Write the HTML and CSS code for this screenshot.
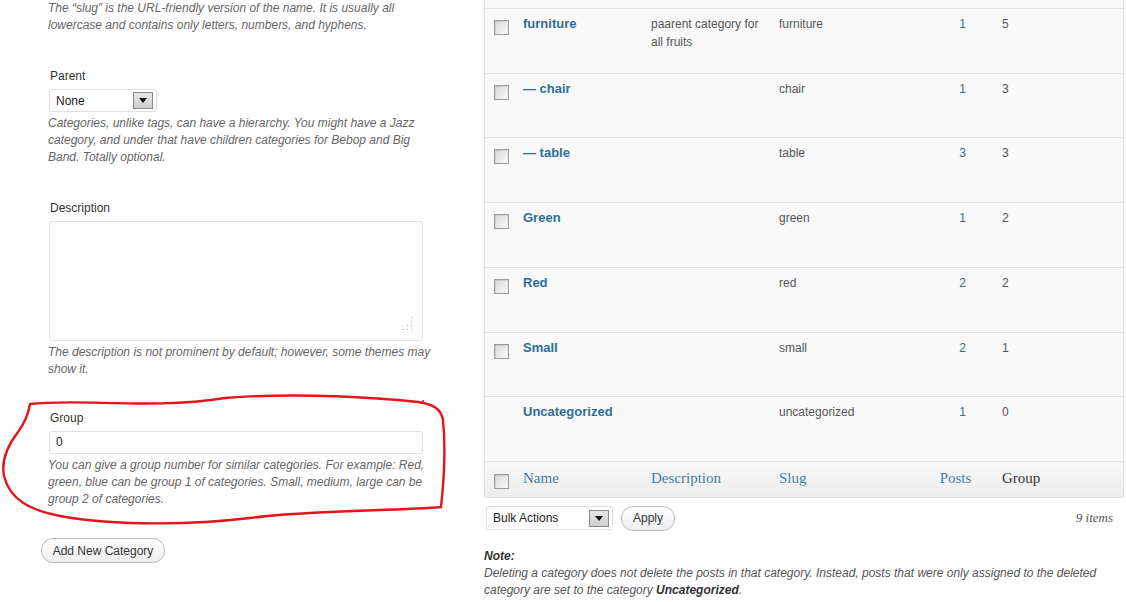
FILE: index.html
```html
<!DOCTYPE html>
<html lang="en">
<head>
<meta charset="utf-8">
<title>Categories</title>
<link rel="stylesheet" href="styles.css">
</head>
<body>
<div class="page">
  <div class="left">
    <p class="help">The “slug” is the URL-friendly version of the name. It is usually all lowercase and contains only letters, numbers, and hyphens.</p>

    <div class="field field-parent">
      <label class="label">Parent</label>
      <div class="select parent-select"><span class="select-text">None</span><span class="arrow"></span></div>
      <p class="help">Categories, unlike tags, can have a hierarchy. You might have a Jazz category, and under that have children categories for Bebop and Big Band. Totally optional.</p>
    </div>

    <div class="field field-desc">
      <label class="label">Description</label>
      <div class="textarea">
        <svg class="grip" width="12" height="14" viewBox="0 0 12 14">
          <rect x="9" y="0" width="1" height="1" fill="#aaa"/>
          <rect x="9" y="4" width="1" height="1" fill="#aaa"/>
          <rect x="5" y="8" width="1" height="1" fill="#aaa"/>
          <rect x="9" y="8" width="1" height="1" fill="#aaa"/>
          <rect x="1" y="12" width="1" height="1" fill="#aaa"/>
          <rect x="5" y="12" width="1" height="1" fill="#aaa"/>
          <rect x="9" y="12" width="1" height="1" fill="#aaa"/>
        </svg>
      </div>
      <p class="help">The description is not prominent by default; however, some themes may show it.</p>
    </div>

    <div class="field field-group">
      <label class="label">Group</label>
      <div class="input">0</div>
      <p class="help">You can give a group number for similar categories. For example: Red, green, blue can be group 1 of categories. Small, medium, large can be group 2 of categories.</p>
    </div>

    <button class="btn add-btn">Add New Category</button>
  </div>

  <div class="right">
    <div class="table">
      <div class="row-tail"></div>

      <div class="row">
        <div class="c-cb"><span class="cb"></span></div>
        <div class="c-name"><a class="name">furniture</a></div>
        <div class="c-desc">paarent category for all fruits</div>
        <div class="c-slug">furniture</div>
        <div class="c-posts"><a class="num">1</a></div>
        <div class="c-group">5</div>
      </div>
      <div class="row">
        <div class="c-cb"><span class="cb"></span></div>
        <div class="c-name"><a class="name">— chair</a></div>
        <div class="c-desc"></div>
        <div class="c-slug">chair</div>
        <div class="c-posts"><a class="num">1</a></div>
        <div class="c-group">3</div>
      </div>
      <div class="row">
        <div class="c-cb"><span class="cb"></span></div>
        <div class="c-name"><a class="name">— table</a></div>
        <div class="c-desc"></div>
        <div class="c-slug">table</div>
        <div class="c-posts"><a class="num">3</a></div>
        <div class="c-group">3</div>
      </div>
      <div class="row">
        <div class="c-cb"><span class="cb"></span></div>
        <div class="c-name"><a class="name">Green</a></div>
        <div class="c-desc"></div>
        <div class="c-slug">green</div>
        <div class="c-posts"><a class="num">1</a></div>
        <div class="c-group">2</div>
      </div>
      <div class="row">
        <div class="c-cb"><span class="cb"></span></div>
        <div class="c-name"><a class="name">Red</a></div>
        <div class="c-desc"></div>
        <div class="c-slug">red</div>
        <div class="c-posts"><a class="num">2</a></div>
        <div class="c-group">2</div>
      </div>
      <div class="row">
        <div class="c-cb"><span class="cb"></span></div>
        <div class="c-name"><a class="name">Small</a></div>
        <div class="c-desc"></div>
        <div class="c-slug">small</div>
        <div class="c-posts"><a class="num">2</a></div>
        <div class="c-group">1</div>
      </div>
      <div class="row">
        <div class="c-cb"></div>
        <div class="c-name"><a class="name">Uncategorized</a></div>
        <div class="c-desc"></div>
        <div class="c-slug">uncategorized</div>
        <div class="c-posts"><a class="num">1</a></div>
        <div class="c-group">0</div>
      </div>

      <div class="row foot">
        <div class="c-cb"><span class="cb"></span></div>
        <div class="c-name"><a class="head-link">Name</a></div>
        <div class="c-desc"><a class="head-link">Description</a></div>
        <div class="c-slug"><a class="head-link">Slug</a></div>
        <div class="c-posts"><a class="head-link posts-link">Posts</a></div>
        <div class="c-group"><span class="head-text">Group</span></div>
      </div>
    </div>

    <div class="tablenav">
      <div class="select bulk-select"><span class="select-text">Bulk Actions</span><span class="arrow"></span></div>
      <button class="btn apply-btn">Apply</button>
      <span class="count">9 items</span>
    </div>

    <div class="note">
      <p class="note-title">Note:</p>
      <p>Deleting a category does not delete the posts in that category. Instead, posts that were only assigned to the deleted category are set to the category <strong>Uncategorized</strong>.</p>
    </div>
  </div>

  <svg class="annotation" width="1126" height="602" viewBox="0 0 1126 602">
    <path d="M30,404 C80,398 150,410 225,398 C300,392 380,398 418,402 C432,404 441,408 443,420 C446,450 444,480 441,507 C400,511 310,510 250,518 C200,524 120,527 60,516 C30,510 10,500 4,476 C1,460 8,445 18,432 C27,420 29,410 30,404 Z" fill="none" stroke="#e4141b" stroke-width="2.4" stroke-linejoin="round"/>
    <circle cx="423" cy="401" r="1" fill="#e4141b"/>
  </svg>
</div>
</body>
</html>
```

FILE: styles.css
```css
html, body {
  margin: 0;
  padding: 0;
  background: #fff;
}

body {
  font-family: "Liberation Sans", Arial, sans-serif;
  font-size: 12px;
  color: #333;
}

.page {
  position: relative;
  display: flex;
  width: 1126px;
  height: 602px;
  overflow: hidden;
}

/* ---------- left column ---------- */
.left {
  width: 484px;
  flex: none;
  box-sizing: border-box;
  padding-left: 41px;
}

.help {
  margin: 0 0 0 7px;
  width: 390px;
  font-style: italic;
  color: #666;
  line-height: 17px;
}

.left > .help {
  margin-bottom: 34px;
}

.field {
  margin: 0 0 33px 8px;
}

.field-parent {
  margin-bottom: 34px;
}

.field-desc {
  margin-bottom: 32px;
}

.field-group {
  margin-bottom: 30px;
}

.field .help {
  margin: 3px 0 0 -1px;
}

.label {
  display: block;
  line-height: 16px;
  margin-left: 1px;
  margin-bottom: 5px;
  color: #333;
}

.select {
  display: flex;
  align-items: center;
  justify-content: space-between;
  box-sizing: border-box;
  background: #fff;
  border: 1px solid #dfdfdf;
  border-radius: 3px;
  padding: 0 3px 0 6px;
  color: #222;
}

.parent-select {
  width: 108px;
  height: 23px;
}

.arrow {
  position: relative;
  width: 20px;
  height: 17px;
  box-sizing: border-box;
  border: 1px solid #888;
  background: linear-gradient(#e6e6e6, #cfcfcf);
}

.arrow::after {
  content: "";
  position: absolute;
  left: 5px;
  top: 5px;
  border-left: 4px solid transparent;
  border-right: 4px solid transparent;
  border-top: 5px solid #111;
}

.textarea {
  position: relative;
  width: 374px;
  height: 120px;
  box-sizing: border-box;
  border: 1px solid #dfdfdf;
  border-radius: 3px;
  background: #fff;
}

.grip {
  position: absolute;
  right: 8px;
  bottom: 9px;
}

.input {
  width: 374px;
  height: 23px;
  box-sizing: border-box;
  border: 1px solid #dfdfdf;
  border-radius: 3px;
  padding: 0 6px;
  line-height: 21px;
  color: #222;
}

.btn {
  font-family: "Liberation Sans", Arial, sans-serif;
  font-size: 12px;
  color: #333;
  border: 1px solid #bbb;
  background: linear-gradient(#fefefe, #eeeeee);
  box-sizing: border-box;
  padding: 0;
  cursor: pointer;
}

.add-btn {
  display: block;
  width: 124px;
  height: 25px;
  border-radius: 12px;
}

/* ---------- right column ---------- */
.right {
  width: 640px;
  flex: none;
}

.table {
  border-left: 1px solid #dfdfdf;
  border-right: 1px solid #dfdfdf;
  border-bottom: 1px solid #dfdfdf;
  border-radius: 0 0 3px 3px;
  background: #f9f9f9;
}

.row-tail {
  height: 9px;
  box-sizing: border-box;
  border-bottom: 1px solid #e1e1e1;
}

.row {
  display: grid;
  grid-template-columns: 31px 128px 128px 158px 65px 1fr;
  height: 64.71px;
  box-sizing: border-box;
  border-bottom: 1px solid #e1e1e1;
  line-height: 18px;
  color: #555;
}

.row > div {
  padding-top: 6px;
}

.row > .c-cb {
  padding: 11px 0 0 9px;
}

.c-name, .c-desc, .c-slug {
  padding-left: 7px;
  padding-right: 7px;
}

.c-posts {
  text-align: center;
}

.c-group {
  padding-left: 7px;
}

.cb {
  display: block;
  width: 15px;
  height: 15px;
  box-sizing: border-box;
  border: 1px solid #9a9a9a;
  background: linear-gradient(135deg, #d8d8d8, #fafafa);
  box-shadow: inset 1px 1px 1px rgba(0,0,0,0.08);
}

.name {
  font-weight: bold;
  font-size: 13px;
  color: #2b6f97;
}

.num {
  color: #2b6f97;
}

.row.foot {
  height: 35px;
  border-bottom: none;
  border-radius: 0 0 3px 3px;
  background: linear-gradient(#f9f9f9, #ececec);
}

.row.foot > div {
  padding-top: 7px;
}

.row.foot > .c-cb {
  padding-top: 12px;
}

.head-link, .head-text {
  font-family: "Liberation Serif", Georgia, serif;
  font-size: 15px;
  line-height: 18px;
}

.head-link {
  color: #3f7da1;
}

.head-text {
  color: #333;
}

.posts-link {
  display: inline-block;
  margin-right: 14px;
}

.tablenav {
  display: flex;
  align-items: center;
  margin-top: 8px;
  padding-left: 2px;
}

.bulk-select {
  width: 127px;
  height: 24px;
  padding-left: 6px;
}

.apply-btn {
  margin-left: 8px;
  width: 54px;
  height: 25px;
  border-radius: 12px;
}

.count {
  margin-left: auto;
  margin-right: 11px;
  font-family: "Liberation Serif", Georgia, serif;
  font-style: italic;
  font-size: 13px;
  color: #555;
}

.note {
  margin-top: 17px;
}

.note p {
  margin: 0;
  font-style: italic;
  color: #555;
  line-height: 17px;
}

.note .note-title {
  font-weight: bold;
  color: #333;
}

.note strong {
  color: #333;
}

/* ---------- annotation ---------- */
.annotation {
  position: absolute;
  left: 0;
  top: 0;
  pointer-events: none;
}
```
